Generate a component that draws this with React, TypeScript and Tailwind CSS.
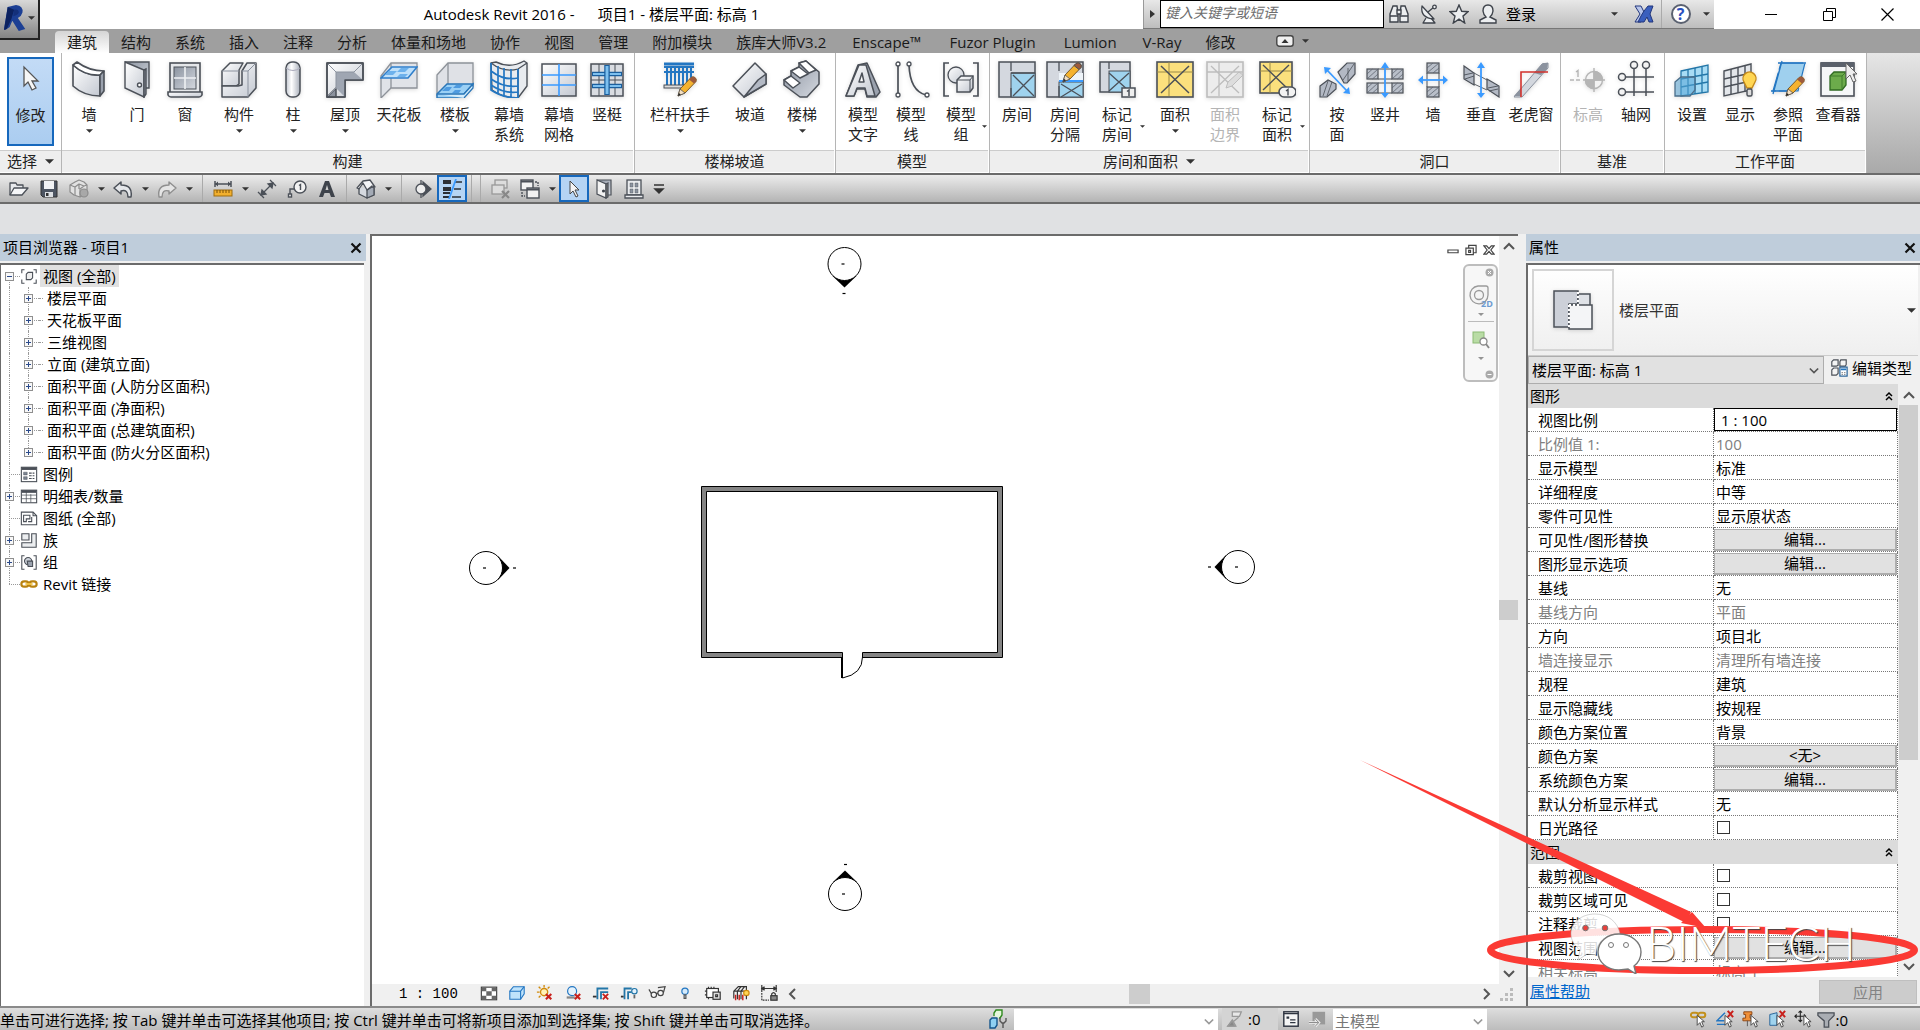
import { ReactNode } from "react";
import { clsx } from "clsx";

type IconMap = Record<string, ReactNode>;

const M = "url(#metal)";
const MD = "url(#metalDark)";
const S = "#4b5058";

const pencil = (
  <g transform="translate(16 16)">
    <path d="M1 20l2-7L14 1.500q2-1.500 4 0t1 4L8 17z" fill="#f5b32f" stroke="#7a5a28" />
    <path d="M14 1.500q2-1.500 4 0t1 4l-2 2-5-4z" fill="#9c5a3c" />
    <path d="M1 20l2-7 5 4z" fill="#f4dfc0" stroke="#555" strokeWidth=".8" />
    <path d="M1 20l.8-3 2 1.500z" fill="#222" />
  </g>
);

const hatch = (x: number, y: number, w: number, h: number) => (
  <g key={`${x}-${y}`}>
    <rect x={x} y={y} width={w} height={h} fill="#b9bfc9" stroke={S} strokeWidth="1.200" />
    <path d={`M${x} ${y + h}L${x + w} ${y}M${x} ${y + h / 2}L${x + w / 2} ${y}M${x + w / 2} ${y + h}L${x + w} ${y + h / 2}`} stroke="#5e6570" strokeWidth=".8" />
  </g>
);

const big: IconMap = {
  cursor: <path d="M12 4v19l4-4 4 8 4-2-4-7h6z" fill="#f6f6f6" stroke="#555" strokeWidth="1.300" />,
  wall: (
    <g stroke={S} strokeWidth="1.600" strokeLinejoin="round">
      <path d="M3 5q12 11 27 10v21Q14 36 3 26z" fill={M} />
      <path d="M3 5l4-3q12 9 27 9l-4 4Q15 16 3 5z" fill="#fff" />
      <path d="M30 15l4-4v20l-4 5z" fill="#9aa1ad" />
    </g>
  ),
  door: (
    <g stroke={S} strokeWidth="1.400">
      <path d="M7 2h24v26h-6" fill={MD} />
      <path d="M7 2l19 8v27L7 28z" fill={M} />
      <path d="M26 10l2-1v25l-2 3z" fill="#8b929e" />
      <circle cx="21.500" cy="25" r="2" fill="#fff" />
    </g>
  ),
  window: (
    <g stroke={S} strokeWidth="1.600">
      <rect x="4" y="3" width="30" height="30" fill="#e5e7ea" />
      <rect x="8" y="7" width="22" height="22" fill={MD} strokeWidth="1" />
      <path d="M19 7v22M8 18h22" stroke="#eef0f3" strokeWidth="1.600" />
      <path d="M2 32h34v3q-1 2-3 2H5q-2 0-3-2z" fill={M} />
    </g>
  ),
  component: (
    <g stroke={S} strokeWidth="1.500" strokeLinejoin="round">
      <path d="M2 11l8-8h13l-4 7v14l-3 2H2z" fill={M} />
      <path d="M2 26v11h26l8-9V3h-9l-5 8v14l-4 1z" fill={M} />
      <path d="M2 11h17M28 11v26M22 11h6l8-8" fill="none" stroke="#8b929e" strokeWidth="1" />
    </g>
  ),
  column: (
    <g stroke={S} strokeWidth="1.500">
      <rect x="12" y="2" width="14" height="35" rx="6" fill="url(#metalH)" />
      <path d="M12 8q7 5 14 0" fill="none" stroke="#aab" strokeWidth="1" />
    </g>
  ),
  roof: (
    <g stroke={S} strokeWidth="1.500" strokeLinejoin="round">
      <path d="M1 3h36v17H19v17H1z" fill={M} />
      <path d="M1 37l9-9v9z" fill="#8b929e" />
      <path d="M10 12h18l9 8H19v17l-9-9z" fill="#9fa6b2" stroke="none" />
      <path d="M1 3l9 9h18l9-9M10 12v16l-9 9" fill="none" stroke="#8b929e" strokeWidth="1" />
      <path d="M1 3h36v17H19v17H1z" fill="none" />
    </g>
  ),
  ceiling: (
    <g stroke="#8d9299" strokeWidth="1.300">
      <path d="M1 16L11 3h26v25H11L1 38z" fill="#e0e3e8" />
      <path d="M11 3v25" />
      <path d="M1 18L12 7h25L28 18z" fill="#bfe0fa" stroke="#2f7fcb" strokeWidth="1.600" />
      <path d="M9 11h8l-4 4H5zM21 8h8l-4 4h-8zM20 14h8l-3 3h-8z" fill="#6db1ec" stroke="none" />
    </g>
  ),
  floor: (
    <g stroke="#8d9299" strokeWidth="1.300">
      <path d="M1 15L12 3h25v23H12L1 35z" fill="#dfe1e6" />
      <path d="M12 3v22" />
      <path d="M1 34l10-10h26l-9 10v4H1z" fill="#9bd0f5" stroke="#2a76b8" strokeWidth="1.500" />
      <path d="M1 34h27l9-10v4l-9 10" fill="#d5edfb" stroke="#2a76b8" strokeWidth="1.300" />
      <path d="M10 27h6l-3 4H6zM20 25h7l-3 3h-7zM19 30h6l-2 3h-7z" fill="#4f9be0" stroke="none" />
    </g>
  ),
  curtainSystem: (
    <g>
      <path d="M1 3l5-1q14 7 28-1l3 2v23l-9 12Q13 38 2 30z" fill="#e8ebef" stroke={S} strokeWidth="1.400" />
      <path d="M1 3q13 10 27 6l9-6M28 9v29" fill="none" stroke={S} strokeWidth="1.300" />
      <path d="M8 6v28M14 8v28M21 9v28M1 11q13 10 27 7M1 19q13 9 27 7M1 25q13 9 27 7M1 3v27q12 8 27 8V9" fill="none" stroke="#2376c2" strokeWidth="1.700" />
    </g>
  ),
  curtainGrid: (
    <g>
      <rect x="2" y="4" width="34" height="32" fill={M} stroke={S} strokeWidth="1.500" />
      <path d="M19 4v32M2 15h34M2 25h34" stroke="#3a9aff" strokeWidth="1.600" />
    </g>
  ),
  mullion: (
    <g>
      <rect x="3" y="4" width="32" height="32" fill="#d9dce1" stroke={S} strokeWidth="1.500" />
      <path d="M11 4v32M27 4v32M3 20h32" stroke={S} strokeWidth="1" />
      <path d="M4 14h30M4 26h30" stroke="#1b5f9e" strokeWidth="4.500" />
      <path d="M5 14h28M5 26h28" stroke="#7dc0ef" strokeWidth="2" />
      <path d="M19 5v30" stroke="#1b5f9e" strokeWidth="5.500" />
      <path d="M19 6v28" stroke="#7dc0ef" strokeWidth="3" />
    </g>
  ),
  railing: (
    <g>
      <path d="M3 7h30M3 12h30M6 7v18M10 7v18M14 7v18M18 7v18M22 7v18M26 7v18M30 7v14" stroke="#2376c2" strokeWidth="2" />
      <path d="M3 4h30" stroke="#2376c2" strokeWidth="3" />
      <rect x="3" y="25" width="20" height="3" fill="#ddd" stroke={S} />
      {pencil}
    </g>
  ),
  ramp: (
    <g stroke={S} strokeWidth="1.500" strokeLinejoin="round">
      <path d="M2 26L24 3l11 11v10L13 37z" fill={M} />
      <path d="M13 37l14-17 8-6v10z" fill="#b3b9c4" />
    </g>
  ),
  stair: (
    <g stroke={S} strokeWidth="1.500" strokeLinejoin="round">
      <path d="M1 20l7-4 0-5 8-4v-4l7-2 13 11v12L24 37h-7L1 25z" fill={MD} />
      <path d="M1 20l7-4 9 7-7 5zM8 11l8-4 9 7-8 4zM16 3l7-2 10 9-7 3z" fill="#fff" />
    </g>
  ),
  modelText: (
    <g stroke={S} strokeWidth="1.500" strokeLinejoin="round">
      <path d="M14 5l9-2 13 29-4 5h-9l-2-8h-8l-3 7H2z" fill="#9aa1ad" />
      <path d="M2 36L15 5h7l9 31h-8l-2-8h-8l-3 8z" fill={M} />
      <path d="M15 22l3-9 2 9z" fill="#fff" />
    </g>
  ),
  modelLine: (
    <g fill="none" stroke={S} strokeWidth="1.700">
      <path d="M6 5v29M17 5q1 26 17 30" />
      <g fill="#fff" strokeWidth="1.300">
        <circle cx="6" cy="4" r="2" /><circle cx="6" cy="35" r="2" /><circle cx="17" cy="4" r="2" /><circle cx="35" cy="35" r="2" />
      </g>
    </g>
  ),
  modelGroup: (
    <g stroke={S} strokeWidth="1.700" fill="none">
      <path d="M7 3H2v33h5M31 3h5v33h-5" />
      <circle cx="14" cy="15" r="8" fill={M} strokeWidth="1.300" />
      <path d="M15 20l4-4h12v12l-3 4H15z" fill={M} strokeWidth="1.500" />
      <path d="M15 20h13v12M28 20l3-4" strokeWidth="1" />
    </g>
  ),
  room: (
    <g stroke={S}>
      <rect x="1" y="2" width="36" height="35" fill="#d4d8df" strokeWidth="1.500" />
      <rect x="13" y="13" width="24" height="24" fill="#9fd3ee" strokeWidth="1" />
      <path d="M13 2v9M13 28v9M13 13h24M15 15l21 21M36 15L15 36" strokeWidth="1.300" />
    </g>
  ),
  roomSeparator: (
    <g stroke={S}>
      <rect x="1" y="2" width="36" height="35" fill="#d4d8df" strokeWidth="1.500" />
      <path d="M13 13h24v9H13z" fill="#eef4f9" stroke="none" />
      <rect x="13" y="22" width="24" height="15" fill="#9fd3ee" strokeWidth="1" />
      <path d="M13 2v9M13 26v11M15 24l21 13M36 24L15 37" strokeWidth="1.300" />
      <path d="M13 21h24" stroke="#3a9aff" strokeWidth="2" />
      <g transform="translate(0 -14)">{pencil}</g>
    </g>
  ),
  tagRoom: (
    <g stroke={S}>
      <rect x="2" y="2" width="30" height="30" fill="#d4d8df" strokeWidth="1.500" />
      <rect x="11" y="11" width="21" height="21" fill="#9fd3ee" strokeWidth="1" />
      <path d="M11 2v7M11 13l20 18M31 13L11 31" strokeWidth="1.300" />
      <rect x="24" y="28" width="13" height="9" fill="#eee" strokeWidth="1.500" />
      <path d="M29 31.500l2-1.500v6" fill="none" strokeWidth="1.500" />
    </g>
  ),
  area: (
    <g stroke={S}>
      <rect x="1" y="2" width="36" height="35" fill="#fbe07d" strokeWidth="1.600" />
      <path d="M13 2v34M1 12h36" stroke="#9b8a48" />
      <path d="M5 6l28 27M33 6L5 33" strokeWidth="1.500" />
    </g>
  ),
  areaBoundary: (
    <g stroke="#bdbdbd">
      <rect x="1" y="2" width="36" height="35" fill="#ececec" strokeWidth="1.600" />
      <path d="M13 2v34M1 12h36M5 6l28 27M33 6L5 33" strokeWidth="1.300" />
      <path d="M20 28l2-6 11-10 4 3-11 11z" fill="#ddd" />
    </g>
  ),
  tagArea: (
    <g stroke={S}>
      <rect x="2" y="2" width="32" height="31" fill="#fbe07d" strokeWidth="1.600" />
      <path d="M12 2v31M2 11h32" stroke="#9b8a48" />
      <path d="M5 5l26 25M31 5L5 30" strokeWidth="1.400" />
      <rect x="21" y="27" width="17" height="10" rx="5" fill="#f2f2f2" strokeWidth="1.600" />
      <path d="M28 31l2-1.500v6" fill="none" strokeWidth="1.400" />
    </g>
  ),
  byFace: (
    <g stroke={S} strokeWidth="1.200">
      <path d="M20 12l9-9h8v11l-8 9h-3z" fill="#b3b9c4" />
      <path d="M2 26l8-6 8 4v5l-9 8H2z" fill="#b3b9c4" />
      <path d="M25 20L36 4M5 36l5-15M9 36l5-14M30 21V8" strokeWidth=".8" />
      <path d="M8 9l22 23" stroke="#3a9aff" strokeWidth="1.800" />
      <path d="M6 7l7 1-6 6zM32 34l-1-7-6 6z" fill="#3a9aff" stroke="none" />
    </g>
  ),
  shaft: (
    <g>
      {hatch(1, 9, 11, 10)}{hatch(26, 9, 11, 10)}{hatch(1, 23, 11, 10)}{hatch(26, 23, 11, 10)}
      <path d="M12 9h14M12 19h14M12 23h14M12 33h14" stroke={S} />
      <path d="M19 6v29" stroke="#3a9aff" strokeWidth="1.800" />
      <path d="M15 8l4-6 4 6zM15 33l4 5 4-5z" fill="#3a9aff" />
    </g>
  ),
  wallOpening: (
    <g>
      {hatch(13, 3, 12, 10)}{hatch(13, 27, 12, 10)}
      <path d="M13 13v14M25 13v14" stroke={S} />
      <path d="M6 20h26" stroke="#3a9aff" strokeWidth="1.800" />
      <path d="M9 15.500L4 20l5 4.500zM29 15.500l5 4.500-5 4.500z" fill="#3a9aff" />
    </g>
  ),
  vertical: (
    <g stroke={S} strokeWidth="1.200">
      <path d="M2 6l10 7v12L2 19zM25 19l12 7v11l-12-8z" fill="#b3b9c4" />
      <path d="M12 13l13 7M12 24l13 6M2 15l9-2M3 19l9-3M26 28l10-2M27 31l9-2" strokeWidth=".9" />
      <path d="M19 6v29" stroke="#3a9aff" strokeWidth="1.800" />
      <path d="M15 8l4-6 4 6zM15 33l4 5 4-5z" fill="#3a9aff" stroke="none" />
    </g>
  ),
  dormer: (
    <g>
      <path d="M2 37L30 4l6-1v5L10 37z" fill="#d3d7de" stroke="#8b929e" />
      <path d="M22 13L31 3h5l-1 6-6 6zM2 36l7-8v8z" fill="#8b929e" />
      <path d="M9 37V12h27" fill="none" stroke="#d2322d" strokeWidth="1.600" />
    </g>
  ),
  level: (
    <g stroke="#b5b5b5" fill="none" strokeWidth="1.400">
      <path d="M1 20h12" strokeDasharray="4 2" />
      <path d="M7 12l2-1.500V17" />
      <circle cx="25" cy="20" r="8.500" fill="#f3f3f3" />
      <path d="M25 20V11.500A8.500 8.500 0 0 1 33.500 20zM25 20v8.500A8.500 8.500 0 0 1 16.500 20z" fill="#b5b5b5" />
      <path d="M25 8v24M14 20h22" />
    </g>
  ),
  grid: (
    <g stroke={S} strokeWidth="1.500" fill="none">
      <path d="M17 9v27M29 9v27M9 17h28M9 32h28" />
      <circle cx="17" cy="5" r="3.500" /><circle cx="29" cy="5" r="3.500" /><circle cx="5" cy="17" r="3.500" /><circle cx="5" cy="32" r="3.500" />
    </g>
  ),
  setPlane: (
    <g stroke="#2376a8" strokeWidth="1.300">
      <path d="M8 11l27-6v27L8 36z" fill="#a8dcf5" />
      <path d="M15 10v25M22 8v26M29 7v26M8 19l27-5M8 27l27-5" fill="none" />
      <path d="M2 22l6-5h14v13l-5 6H2z" fill="#58a5d5" fillOpacity=".55" stroke="#4b6f8b" />
    </g>
  ),
  showPlane: (
    <g stroke={S} strokeWidth="1.400">
      <path d="M3 11l27-7v26L3 36z" fill="#e3e6ea" />
      <path d="M10 9v25M17 7v26M24 6v26M3 19l27-6M3 27l27-6" fill="none" />
      <path d="M23 22a6.500 6.500 0 1 1 11 0l-3 6h-5z" fill="#ffd653" stroke="#c58a1b" />
      <rect x="26" y="29" width="5" height="7" rx="1.500" fill="#ddd" />
    </g>
  ),
  refPlane: (
    <g>
      <path d="M12 3h24l-7 28H4z" fill="#9fd0ee" stroke="#2376c2" strokeWidth="1.200" strokeDasharray="22 3" />
      <path d="M9 3h28M2 31h20M13 1L4 34" stroke="#2376c2" strokeWidth="1.300" />
      {pencil}
    </g>
  ),
  viewer: (
    <g>
      <rect x="2" y="3" width="33" height="33" fill="#f5f6f7" stroke={S} strokeWidth="1.600" />
      <rect x="2" y="2" width="33" height="5" fill="#5b616b" />
      <path d="M11 16l4-4h12v13l-4 5H11z" fill="#6cab4b" stroke="#2f6a22" strokeWidth="1.300" />
      <path d="M11 16h12l4-4M23 16v14" fill="none" stroke="#3f7d2c" />
      <path d="M27 3v16l4-4 3 7 3-1-3-7h4z" fill="#eee" stroke="#666" />
    </g>
  ),
};

// small 20x20 glyphs of the bars
const small: IconMap = {
  open: (
    <g stroke={S} strokeWidth="1.300" strokeLinejoin="round">
      <path d="M1 16V4h6l1 2h6v3" fill="#e8eaed" />
      <path d="M1 16l4-7h14l-6 7z" fill="#f5f6f8" />
    </g>
  ),
  save: (
    <g>
      <path d="M2 2h16v16H4l-2-2z" fill="#4d5562" stroke="#333" />
      <path d="M5 2h10v8H5z" fill="#f1f2f4" />
      <path d="M6 13h8v5H6z" fill="#dcdfe3" /><path d="M7 14h2.500v3H7z" fill="#333" />
    </g>
  ),
  sync: (
    <g stroke="#8c8c8c" strokeWidth="1.200" fill="#e2e2e2" strokeLinejoin="round">
      <path d="M1 6l5-3 4-2 5 2 3 3v8l-7 4-6-2-4-3z" />
      <path d="M1 6l5 2 4-3 5 2 3-1M6 8v8M10 5v5M11 18v-8l4-3" fill="none" />
      <circle cx="15" cy="14" r="4" fill="#a8a8a8" />
    </g>
  ),
  undo: <path d="M8 3L1 9l7 6v-3q7-2 7 6h3q2-12-10-12z" fill="#e5e7ea" stroke={S} strokeWidth="1.500" strokeLinejoin="round" />,
  redo: <path d="M12 3l7 6-7 6v-3q-7-2-7 6H2Q0 6 12 6z" fill="#e5e5e5" stroke="#8f8f8f" strokeWidth="1.400" strokeLinejoin="round" />,
  measure: (
    <g>
      <path d="M2 5h16M2 2v6M18 2v6" stroke={S} strokeWidth="1.500" />
      <path d="M5 2.500L2 5l3 2.500zM15 2.500L18 5l-3 2.500z" fill={S} />
      <rect x="1" y="11" width="18" height="6" fill="#f2b02e" stroke="#9d6d11" />
      <path d="M4 11v3M7 11v3M10 11v3M13 11v3M16 11v3" stroke="#7a5108" />
    </g>
  ),
  dimension: (
    <g stroke={S} strokeWidth="1.300">
      <path d="M4 16L16 4M1 13l6 6M13 1l6 6" /><path d="M4 16l1-5 4 4zM16 4l-1 5-4-4z" fill={S} />
    </g>
  ),
  tag: (
    <g stroke={S} strokeWidth="1.400" fill="#f2f2f2">
      <circle cx="13" cy="8" r="6" /><path d="M12 6.500l1.500-1v5.500" fill="none" /><path d="M7 10H3v6" fill="none" /><rect x="1.500" y="15" width="3" height="3" />
    </g>
  ),
  text: <path d="M2 18L8 2h4l6 16h-4l-1.500-4h-5L6 18zM8.500 11h3L10 6z" fill="#3e434b" />,
  home: (
    <g stroke={S} strokeWidth="1.300" strokeLinejoin="round">
      <path d="M3 9v6l8 4 7-3V8" fill="#d5d9df" />
      <path d="M11 11l5-3 2 1v7l-7 3z" fill="#a4abb6" />
      <path d="M1 9l6-7 7-1 5 7-3-1-5 4-4-7-4 6z" fill="#f4f5f7" />
    </g>
  ),
  section: (
    <g stroke={S} strokeWidth="1.300"><path d="M11 3l8 7-8 7z" fill={S} /><circle cx="9" cy="10" r="5" fill="#eee" /><path d="M9 1v4M9 15v4" /></g>
  ),
  thinLines: (
    <g>
      <path d="M1 3h8M1 10h8" stroke="#2b2f36" strokeWidth="4" /><path d="M1 14h7M1 18h6" stroke="#2b2f36" strokeWidth="1.800" />
      <path d="M13 3h7M12 10h7M10 18h9" stroke="#2b2f36" strokeWidth="1.300" /><path d="M14 0L7 20" stroke="#3a9aff" strokeWidth="1.800" />
    </g>
  ),
  closeHidden: (
    <g fill="#ddd" stroke="#999" strokeWidth="1.300"><rect x="5" y="1" width="12" height="8" /><rect x="2" y="6" width="12" height="9" /><path d="M12 12l7 7M19 12l-7 7" stroke="#888" strokeWidth="2.200" /></g>
  ),
  switchWin: (
    <g fill="#f2f2f2" stroke={S} strokeWidth="1.400"><rect x="1" y="1" width="12" height="10" /><rect x="7" y="9" width="12" height="10" /><path d="M1 2.500h12M7 10.500h12" strokeWidth="2" /><path d="M15 3h3v4M2 13v4h3" fill="none" strokeDasharray="2 1" /></g>
  ),
  cursorS: <path d="M6 2v13l3-3 3 6 2-1-3-6h4z" fill="#f4f4f4" stroke="#444" />,
  doorS: (
    <g stroke={S} strokeWidth="1.200"><path d="M3 1h14v15h-3" fill={MD} /><path d="M3 1l9 4v14l-9-4z" fill="#f2f2f2" /><path d="M12 5l2-1v14l-2 1z" fill="#777" /><circle cx="9.500" cy="12" r="1" /></g>
  ),
  windowS: (
    <g stroke={S} strokeWidth="1.300" fill="#e9ebee"><rect x="3" y="1" width="14" height="15" /><path d="M6 4h3v4H6zM11 4h3v4h-3zM6 10h3v4H6zM11 10h3v4h-3z" fill="#8b93a0" strokeWidth=".4" /><path d="M1 16h18v3H1z" /></g>
  ),
  customise: <path d="M5 6h10M6 10h8l-4 4z" stroke="#333" strokeWidth="1.500" fill="#333" />,
  binoculars: (
    <g stroke="#3e434b" strokeWidth="1.400" fill="#eceef0"><path d="M4 2h4l1 8v8H1v-8zM12 2h4l3 8v8h-8v-8z" /><path d="M1 12h8M11 12h8M8 6h4v4H8z" /></g>
  ),
  dish: (
    <g stroke="#3e434b" strokeWidth="1.300" fill="#eceef0" strokeLinejoin="round"><path d="M7 14l-3 5h12l-4-5" /><path d="M3 2q-2 12 12 13z" /><path d="M9 8l6-5" /><circle cx="15.500" cy="3" r="1.800" /></g>
  ),
  star: <path d="M10 1l2.700 6.300 6.300.4-5 4.400 1.700 6.900L10 15.200 4.300 19 6 12.100 1 7.700l6.300-.4z" fill="#eceef0" stroke="#3e434b" strokeWidth="1.400" />,
  user: <path d="M10 1q5 0 5 6-.500 4-3 6l6 3v3H2v-3l6-3q-2.500-2-3-6 0-6 5-6z" fill="#eceef0" stroke="#3e434b" strokeWidth="1.400" />,
  exchange: (
    <g stroke="#22367c" strokeWidth="1"><path d="M1 2h6l4 8-4 8H1l5-8z" fill="#b9c6ea" /><path d="M19 2h-5l-4 5-3 5-3 6h6l3-5 2 5h4l-3-8z" fill="#3a5fbe" /></g>
  ),
  views: (
    <g stroke="#4a4f57" strokeWidth="1.200" fill="none"><path d="M5 3H2v4M15 3h3v4M5 18H2v-4M15 18h3v-4" /><path d="M7 8l2-2h5v6l-2 2H7z" fill="#eee" /></g>
  ),
  legend: (
    <g stroke="#4a4f57" strokeWidth="1.200"><rect x="1.500" y="2.500" width="17" height="16" fill="#fff" /><path d="M2 4h16" strokeWidth="3" /><path d="M4 8h4v3H4zM4 13h4v3H4z" fill="#7d8693" strokeWidth=".5" /><path d="M10 9h6M10 12h6M10 15h6" strokeDasharray="3 1" /></g>
  ),
  schedule: (
    <g stroke="#4a4f57" strokeWidth="1.200"><rect x="1.500" y="3.500" width="17" height="14" fill="#fff" /><path d="M2 5h16" strokeWidth="3" /><path d="M2 9h16M2 13h16M7 5v12M12 8v9" strokeWidth=".8" /></g>
  ),
  sheet: (
    <g stroke="#4a4f57" strokeWidth="1.200" fill="#fff"><path d="M1.500 3.500h13l4 4v10h-17z" /><path d="M4 7h7v4H7v3H4zM13 9v5h-4M14.500 3.500v4h4" fill="none" /></g>
  ),
  family: (
    <g stroke="#4a4f57" strokeWidth="1.200" fill="#eceef0"><path d="M2 3h8v7H2zM13 3h5v15H2v-5h11z" /></g>
  ),
  group: (
    <g stroke="#4a4f57" strokeWidth="1.200" fill="none"><path d="M5 3H2v15h3M15 3h3v15h-3" /><circle cx="9" cy="9" r="4" fill="#cfd4dc" /><path d="M8 9h6v6H9z" fill="#9aa2ae" /></g>
  ),
  link: (
    <g fill="none" stroke="#b9820f" strokeWidth="2.400"><rect x="1.500" y="7" width="8" height="6" rx="3" /><rect x="10.500" y="7" width="8" height="6" rx="3" /><path d="M6 10h8" stroke="#f4c542" strokeWidth="2" /></g>
  ),
  editType: (
    <g stroke={S} strokeWidth="1.300" fill="#f4f4f4"><path d="M2 3l2-2h5v6l-2 1H2zM11 3l1-2h6v5l-1 2h-6zM2 12l2-2h5v6l-2 2H2z" /><rect x="11" y="9" width="8" height="10" fill="#fff" stroke="#1f5d95" /><path d="M12 11.500h6" stroke="#2376c2" strokeWidth="2" /><path d="M13 15h1M16 15h1M13 17h1M16 17h1" /></g>
  ),
  detail: (
    <g><rect x="1.500" y="3.500" width="17" height="14" fill="#fff" stroke="#444" strokeWidth="1.300" /><path d="M2 4h5v4H2zM13 4h5v4h-5zM7 8h6v5H7zM2 13h5v4H2zM13 13h5v4h-5z" fill="#666" /></g>
  ),
  cube: (
    <g fill="#bfe3fb" stroke="#2376c2" strokeWidth="1.200"><path d="M2 8l4-5h12v8l-4 6H2z" /><path d="M2 8h12v9M14 8l4-5" fill="none" /></g>
  ),
  sun: (
    <g><circle cx="9" cy="9" r="4" fill="#fff2b8" stroke="#d18b0d" strokeWidth="1.500" /><path d="M9 1v3M1 9h3M3 3l2 2M15 3l-2 2M3 15l2-2" stroke="#d18b0d" strokeWidth="1.500" /><path d="M11 11l6 6M17 11l-6 6" stroke="#c8201c" strokeWidth="2.300" /></g>
  ),
  shadow: (
    <g><circle cx="9" cy="8" r="5" fill="#e4f2fc" stroke="#2376c2" strokeWidth="1.300" /><path d="M3 15h9" stroke="#888" strokeWidth="2.500" /><path d="M12 11l6 6M18 11l-6 6" stroke="#c8201c" strokeWidth="2.300" /></g>
  ),
  crop: (
    <g fill="none" stroke="#2376a8" strokeWidth="2"><path d="M6 17V5h12M10 17V9h8" /><path d="M1 14h4" stroke="#333" /><path d="M12 11l6 6M18 11l-6 6" stroke="#c8201c" /></g>
  ),
  cropShow: (
    <g fill="none" stroke="#2376a8" strokeWidth="2"><path d="M5 17V5h8M9 17V9h4" /><path d="M1 14h3" stroke="#333" /><circle cx="16" cy="8" r="3" fill="#e4f2fc" strokeWidth="1.300" /><path d="M16 12v4" stroke="#666" /></g>
  ),
  glasses: (
    <g fill="#f6f6f6" stroke="#444" strokeWidth="1.300"><path d="M1 6l3 5M11 4l8-1-2 7" fill="none" /><circle cx="6.500" cy="12" r="3" /><circle cx="14" cy="10" r="3" /><path d="M9 11l2-1" /></g>
  ),
  bulb: (
    <g fill="#d6ebfb" stroke="#2376c2" strokeWidth="1.300"><circle cx="10" cy="8" r="3.500" /><path d="M9 12h2v4H9z" stroke="#555" /></g>
  ),
  chip: (
    <g fill="#fff" stroke="#333" strokeWidth="1.300"><rect x="3" y="5" width="13" height="10" /><path d="M5 3v2M8 3v2M11 3v2M5 15v2M1 8h2M1 12h2" /><rect x="10" y="9" width="8" height="8" fill="#ddd" /><path d="M13 12h2v2h-2z" /></g>
  ),
  analytic: (
    <g fill="none" stroke="#333" strokeWidth="1.300"><path d="M2 16V8l5-5h9v6M2 8h12M6 8v9M10 8v9M6 8l4-5M10 8l4-5" /><path d="M4 12v6M8 12v6M12 12v6" stroke="#c8201c" strokeWidth="1.600" /><circle cx="16" cy="10" r="3" fill="#ffd653" stroke="#d18b0d" /><path d="M16 13v4" /></g>
  ),
  constraint: (
    <g fill="none" stroke="#333" strokeWidth="1.300"><path d="M2 1v8M18 1v8M2 5h16" /><path d="M2 10v8h8" strokeDasharray="2 1" /><path d="M5 3L2 5l3 2M15 3l3 2-3 2" fill="#333" /><rect x="12" y="13" width="7" height="5" fill="#888" /><path d="M13 13v-2q2-3 4 0v2" /></g>
  ),
  worksets: (
    <g strokeWidth="1.400"><path d="M2 11l2-2h5v7l-2 3H2z" fill="#8ed0f2" stroke="#14568c" /><path d="M6 7V4l2-3h6v5l-2 3h-1" fill="#e6f6dc" stroke="#2f8a1e" /><path d="M12 9v3l2 2h2l2-2V9M15 14v5" stroke="#555" fill="none" /></g>
  ),
  editable: (
    <g fill="#e8e8e8" stroke="#999" strokeWidth="1.400"><path d="M7 2h10l-2 5H7zM14 8l-6 5M2 18l5-7 4 7z" /><path d="M2 18l5-6 3 6z" fill="#888" /></g>
  ),
  listBox: (
    <g fill="#f5f5f5" stroke="#2e3440" strokeWidth="1.600"><rect x="2" y="2" width="16" height="16" /><path d="M2 4h16M5 8h3M9 11h6M9 14h6M5 9h3" /></g>
  ),
  arrowBox: (
    <g><rect x="5" y="2" width="14" height="14" fill="#999" /><path d="M1 14h10M8 10l4 4-4 4" fill="none" stroke="#eee" strokeWidth="3" /><path d="M1 14h10M8 10l4 4-4 4" fill="none" stroke="#777" /></g>
  ),
  selLink: (
    <g><rect x="1" y="3" width="8" height="5" rx="2.500" fill="none" stroke="#c2901b" strokeWidth="2.200" /><rect x="9" y="3" width="8" height="5" rx="2.500" fill="none" stroke="#c2901b" strokeWidth="2.200" /><path d="M8 6v11l3-3 2 5 2-1-2-5h3z" fill="#fff" stroke="#444" /></g>
  ),
  selUnder: (
    <g><path d="M10 3L1 12h8M1 16h9" fill="none" stroke="#2376c2" strokeWidth="1.600" /><path d="M13 1l6 7M19 1l-6 7" stroke="#c8201c" strokeWidth="2.200" /><path d="M10 6v11l3-3 2 5 2-1-2-5h3z" fill="#fff" stroke="#444" /></g>
  ),
  selPin: (
    <g><path d="M2 2h9v3H9v4h3v3H1V9h3V5H2z" fill="#f0913a" stroke="#8a4210" /><path d="M6 12v6" stroke="#555" /><path d="M10 6v11l3-3 2 5 2-1-2-5h3z" fill="#fff" stroke="#444" /></g>
  ),
  selFace: (
    <g><path d="M2 5l8-2v14H2z" fill="#9fd3ee" stroke="#1f5d95" /><path d="M13 1l6 7M19 1l-6 7" stroke="#c8201c" strokeWidth="2.200" /><path d="M10 6v11l3-3 2 5 2-1-2-5h3z" fill="#fff" stroke="#444" /></g>
  ),
  selDrag: (
    <g><path d="M7 1v12M1 7h12M5 3l2-2 2 2M5 11l2 2 2-2M3 5L1 7l2 2M11 5l2 2-2 2" fill="none" stroke="#222" strokeWidth="1.200" /><path d="M11 6v11l3-3 2 5 2-1-2-5h3z" fill="#fff" stroke="#444" /></g>
  ),
  filter: <path d="M1 2h18v3l-6 6v7H8v-7L1 5z" fill="#a9adb3" stroke="#4a4f57" strokeWidth="1.400" />,
};

function Icon({ name, className }: { name: string; className?: string }) {
  return (
    <svg viewBox="0 0 20 20" aria-hidden="true" className={clsx("shrink-0", className ?? "size-5")}>
      {small[name]}
    </svg>
  );
}

function Caret({ className }: { className?: string }) {
  return (
    <svg viewBox="0 0 8 4" aria-hidden="true" className={clsx("shrink-0", className ?? "h-[3px] w-[6px]")}>
      <path d="M0 0h8L4 4z" fill="#333" />
    </svg>
  );
}

function Chevron({ d, className }: { d: string; className?: string }) {
  return (
    <svg viewBox="0 0 12 12" aria-hidden="true" className={clsx("size-3", className)}>
      <path d={d} fill="none" stroke="currentColor" strokeWidth="2" />
    </svg>
  );
}

const UP = "M1 9l5-5 5 5";
const DOWN = "M1 3l5 5 5-5";

const tabs = [
  "建筑", "结构", "系统", "插入", "注释", "分析", "体量和场地", "协作", "视图", "管理",
  "附加模块", "族库大师V3.2", "Enscape™", "Fuzor Plugin", "Lumion", "V-Ray", "修改",
];
const pluginTabs = ["Enscape™", "Fuzor Plugin", "Lumion"];

const W = {
  xs: "w-[44px]",
  sm: "w-[48px]",
  md: "w-[52px]",
  lg: "w-[56px]",
  tag: "w-[60px]",
  wide: "w-[88px]",
};

type Tool = {
  icon: string;
  lines: string[];
  size: keyof typeof W;
  menu?: "below" | "side";
  disabled?: boolean;
};

type Panel = { title: string; width: string; tools: Tool[]; menu?: boolean };

const panels: Panel[] = [
  {
    title: "构建",
    width: "w-[573px]",
    tools: [
      { icon: "wall", lines: ["墙"], size: "md", menu: "below" },
      { icon: "door", lines: ["门"], size: "xs" },
      { icon: "window", lines: ["窗"], size: "md" },
      { icon: "component", lines: ["构件"], size: "lg", menu: "below" },
      { icon: "column", lines: ["柱"], size: "md", menu: "below" },
      { icon: "roof", lines: ["屋顶"], size: "md", menu: "below" },
      { icon: "ceiling", lines: ["天花板"], size: "lg" },
      { icon: "floor", lines: ["楼板"], size: "lg", menu: "below" },
      { icon: "curtainSystem", lines: ["幕墙", "系统"], size: "md" },
      { icon: "curtainGrid", lines: ["幕墙", "网格"], size: "sm" },
      { icon: "mullion", lines: ["竖梃"], size: "sm" },
    ],
  },
  {
    title: "楼梯坡道",
    width: "w-[201px]",
    tools: [
      { icon: "railing", lines: ["栏杆扶手"], size: "wide", menu: "below" },
      { icon: "ramp", lines: ["坡道"], size: "md" },
      { icon: "stair", lines: ["楼梯"], size: "md", menu: "below" },
    ],
  },
  {
    title: "模型",
    width: "w-[154px]",
    tools: [
      { icon: "modelText", lines: ["模型", "文字"], size: "md" },
      { icon: "modelLine", lines: ["模型", "线"], size: "xs" },
      { icon: "modelGroup", lines: ["模型", "组"], size: "lg", menu: "side" },
    ],
  },
  {
    title: "房间和面积",
    width: "w-[320px]",
    menu: true,
    tools: [
      { icon: "room", lines: ["房间"], size: "md" },
      { icon: "roomSeparator", lines: ["房间", "分隔"], size: "xs" },
      { icon: "tagRoom", lines: ["标记", "房间"], size: "tag", menu: "side" },
      { icon: "area", lines: ["面积"], size: "lg", menu: "below" },
      { icon: "areaBoundary", lines: ["面积", "边界"], size: "xs", disabled: true },
      { icon: "tagArea", lines: ["标记", "面积"], size: "tag", menu: "side" },
    ],
  },
  {
    title: "洞口",
    width: "w-[251px]",
    tools: [
      { icon: "byFace", lines: ["按", "面"], size: "md" },
      { icon: "shaft", lines: ["竖井"], size: "xs" },
      { icon: "wallOpening", lines: ["墙"], size: "md" },
      { icon: "vertical", lines: ["垂直"], size: "xs" },
      { icon: "dormer", lines: ["老虎窗"], size: "lg" },
    ],
  },
  {
    title: "基准",
    width: "w-[104px]",
    tools: [
      { icon: "level", lines: ["标高"], size: "md", disabled: true },
      { icon: "grid", lines: ["轴网"], size: "xs" },
    ],
  },
  {
    title: "工作平面",
    width: "w-[202px]",
    tools: [
      { icon: "setPlane", lines: ["设置"], size: "md" },
      { icon: "showPlane", lines: ["显示"], size: "xs" },
      { icon: "refPlane", lines: ["参照", "平面"], size: "md" },
      { icon: "viewer", lines: ["查看器"], size: "sm" },
    ],
  },
];

// "|" is a separator, "v" the drop-down arrow of the button before it
const quickAccess = [
  "open", "save", "sync", "v", "undo", "v", "redo", "v", "|3", "measure", "v", "dimension", "tag", "text", "|2",
  "home", "v", "|3", "section", "thinLines", "|2", "|2", "closeHidden", "switchWin", "v", "cursorS", "doorS", "windowS",
];

type Node = { label: string; icon?: string; box?: "+" | "-"; child?: boolean; last?: boolean; selected?: boolean };

const tree: Node[] = [
  { label: "视图 (全部)", icon: "views", box: "-", selected: true },
  { label: "楼层平面", child: true },
  { label: "天花板平面", child: true },
  { label: "三维视图", child: true },
  { label: "立面 (建筑立面)", child: true },
  { label: "面积平面 (人防分区面积)", child: true },
  { label: "面积平面 (净面积)", child: true },
  { label: "面积平面 (总建筑面积)", child: true },
  { label: "面积平面 (防火分区面积)", child: true, last: true },
  { label: "图例", icon: "legend" },
  { label: "明细表/数量", icon: "schedule", box: "+" },
  { label: "图纸 (全部)", icon: "sheet" },
  { label: "族", icon: "family", box: "+" },
  { label: "组", icon: "group", box: "+" },
  { label: "Revit 链接", icon: "link", last: true },
];

type Prop = { name: string; value?: string; kind?: "edit" | "check" | "input" | "group"; muted?: boolean };

const props: Prop[] = [
  { name: "图形", kind: "group" },
  { name: "视图比例", value: "1 : 100", kind: "input" },
  { name: "比例值 1:", value: "100", muted: true },
  { name: "显示模型", value: "标准" },
  { name: "详细程度", value: "中等" },
  { name: "零件可见性", value: "显示原状态" },
  { name: "可见性/图形替换", value: "编辑...", kind: "edit" },
  { name: "图形显示选项", value: "编辑...", kind: "edit" },
  { name: "基线", value: "无" },
  { name: "基线方向", value: "平面", muted: true },
  { name: "方向", value: "项目北" },
  { name: "墙连接显示", value: "清理所有墙连接", muted: true },
  { name: "规程", value: "建筑" },
  { name: "显示隐藏线", value: "按规程" },
  { name: "颜色方案位置", value: "背景" },
  { name: "颜色方案", value: "<无>", kind: "edit" },
  { name: "系统颜色方案", value: "编辑...", kind: "edit" },
  { name: "默认分析显示样式", value: "无" },
  { name: "日光路径", kind: "check" },
  { name: "范围", kind: "group" },
  { name: "裁剪视图", kind: "check" },
  { name: "裁剪区域可见", kind: "check" },
  { name: "注释裁剪", kind: "check" },
  { name: "视图范围", value: "编辑...", kind: "edit" },
  { name: "相关标高", value: "标高 1", muted: true },
];

function TitleBar() {
  return (
    <header className="flex h-[29px] items-start bg-white">
      <button aria-label="应用程序菜单" className="relative z-10 flex h-10 w-10 shrink-0 items-start border-r-2 border-b-2 border-[#222] bg-linear-to-b from-[#d8d8d8] to-[#858585] pt-1 pl-1">
        <svg viewBox="0 0 26 28" className="h-7 w-6">
          <path d="M4 2l9-2q8 1 7 8-1 4-5 6l8 12-7 2-7-11-3 7-5 3-1-1z" fill="#1c3f94" />
          <path d="M4 2l7 3-3 10-5 11-3 1z" fill="#0c2260" />
          <path d="M11 5q5-1 5 3-1 3-6 4z" fill="#14307a" />
        </svg>
        <Caret className="mt-3 h-1 w-[7px]" />
      </button>
      <h1 className="flex-1 text-center text-[15px] leading-7 whitespace-pre">Autodesk Revit 2016 -      项目1 - 楼层平面: 标高 1</h1>
      <div className="flex h-[29px] w-[571px] border-b border-[#777] bg-linear-to-b from-[#e8e8e8] to-[#bdbdbd]">
        <button aria-label="展开" className="flex w-[17px] items-center justify-center border-l border-[#999]">
          <svg viewBox="0 0 5 8" className="h-2 w-[5px]"><path d="M0 0v8l5-4z" fill="#333" /></svg>
        </button>
        <input
          aria-label="搜索"
          placeholder="键入关键字或短语"
          className="w-56 border border-black bg-white px-1 pb-1 font-['Noto_Sans_CJK_SC',sans-serif] text-sm italic placeholder:text-[#6d6d6d] placeholder:italic"
        />
        {["binoculars", "dish", "star"].map((n) => (
          <button key={n} aria-label={n} className="flex w-[30px] items-center justify-center"><Icon name={n} /></button>
        ))}
        <button className="flex flex-1 items-center pl-1 text-[15px]">
          <Icon name="user" />
          <span className="flex-1 pl-2 text-left">登录</span>
          <Caret className="mr-2 h-1 w-[7px]" />
        </button>
        <button aria-label="Exchange Apps" className="flex w-9 items-center justify-center border-r border-[#aaa]"><Icon name="exchange" /></button>
        <button aria-label="帮助" className="flex w-[52px] items-center justify-center gap-3 pl-1">
          <span className="flex size-5 items-center justify-center rounded-full border-2 border-[#5a6170] bg-white text-base font-bold text-[#2a4fc0]">?</span>
          <Caret className="h-1 w-[7px]" />
        </button>
      </div>
      <div className="flex h-[29px] w-[206px] pl-7">
        <button aria-label="最小化" className="flex w-[58px] items-center justify-center"><span className="h-px w-3 bg-black" /></button>
        <button aria-label="还原" className="flex w-[58px] items-center justify-center">
          <svg viewBox="0 0 13 13" className="size-[13px]"><path d="M3.500 3V.5h9v9H10M.5 3.500h9v9h-9z" fill="none" stroke="#000" /></svg>
        </button>
        <button aria-label="关闭" className="flex w-[58px] items-center justify-center">
          <svg viewBox="0 0 13 13" className="size-[13px]"><path d="M.5.5l12 12M12.500.5l-12 12" stroke="#000" strokeWidth="1.200" /></svg>
        </button>
      </div>
    </header>
  );
}

function RibbonTabs() {
  return (
    <nav className="flex h-6 items-end bg-[#9f9f9f] pl-[55px] text-[15px] text-[#1a1a1a]">
      {tabs.map((tab, i) => (
        <button
          key={tab}
          className={clsx(
            "h-[22px] leading-[22px] whitespace-nowrap",
            pluginTabs.includes(tab) ? "px-[14px]" : "px-3",
            i === 0 && "rounded-t-sm bg-linear-to-b from-[#d5d5d5] to-white",
          )}
        >
          {tab}
        </button>
      ))}
      <button aria-label="功能区显示" className="flex h-6 items-center gap-2 pl-7">
        <svg viewBox="0 0 18 12" className="h-3 w-[18px]">
          <rect x=".8" y=".8" width="16.400" height="10.400" rx="2.500" fill="#f0f0f0" stroke="#444" strokeWidth="1.400" />
          <path d="M5.500 8h7L9 4z" fill="#333" />
        </svg>
        <Caret className="h-1 w-[7px]" />
      </button>
    </nav>
  );
}

function ToolButton({ tool }: { tool: Tool }) {
  return (
    <button
      disabled={tool.disabled}
      className={clsx("relative flex shrink-0 flex-col items-center pt-[7px] text-[15px] leading-5", W[tool.size], tool.disabled ? "text-[#b4b4b4]" : "text-[#222]")}
    >
      <svg viewBox="0 0 38 38" aria-hidden="true" className="mb-[6px] size-[38px] drop-shadow-sm">{big[tool.icon]}</svg>
      {tool.lines.map((line) => (
        <span key={line} className="whitespace-nowrap">{line}</span>
      ))}
      {tool.menu === "below" && <Caret className="mt-[5px] h-1 w-[7px]" />}
      {tool.menu === "side" && <Caret className="absolute right-[2px] bottom-[22px] h-[3px] w-[5px]" />}
    </button>
  );
}

function Ribbon() {
  return (
    <section className="flex h-[120px] bg-linear-to-b from-[#e6e6e6] to-[#a9a9a9]">
      <div className="flex w-[62px] shrink-0 flex-col border-r border-[#b5b5b5] bg-white">
        <div className="h-[97px] px-[7px] pt-1">
          <button className="flex h-[89px] w-full flex-col items-center border-2 border-[#1668bd] bg-linear-to-b from-[#c3dbf6] to-[#abcdf0] pt-1 text-[15px] leading-5 text-[#222]">
            <svg viewBox="0 0 38 38" className="mb-1 size-[38px]">{big.cursor}</svg>
            修改
          </button>
        </div>
        <button className="flex h-[22px] items-center gap-2 border-t border-[#ccc] bg-[#eee] pl-[7px] text-[15px] text-[#222]">
          选择 <Caret className="h-[5px] w-[9px]" />
        </button>
      </div>
      {panels.map((panel) => (
        <div key={panel.title} className={clsx("flex shrink-0 flex-col border-r border-[#b5b5b5] bg-white", panel.width)}>
          <div className="flex h-[97px] pl-px">
            {panel.tools.map((tool) => (
              <ToolButton key={tool.icon} tool={tool} />
            ))}
          </div>
          <div className="mr-px flex h-[22px] items-center justify-center gap-2 border-t border-[#ccc] bg-[#eee] text-[15px] text-[#222]">
            {panel.title}
            {panel.menu && <Caret className="h-[5px] w-[9px]" />}
          </div>
        </div>
      ))}
    </section>
  );
}

function QuickAccess() {
  return (
    <div className="flex h-[31px] items-stretch border-y-2 border-[#6b6b6b] bg-linear-to-b from-[#ececec] to-[#b4b4b4] pl-1">
      {quickAccess.map((item, i) => {
        if (item === "v")
          return <button key={i} aria-label="更多" className="flex w-[14px] items-center justify-center"><Caret className="h-1 w-[7px]" /></button>;
        if (item[0] === "|")
          return <span key={i} className={clsx("flex justify-center", item === "|3" ? "w-3" : "w-[9px]")}><span className="w-px bg-[#aaa]" /></span>;
        return (
          <button
            key={i}
            aria-label={item}
            className={clsx("flex w-[30px] items-center justify-center", (item === "thinLines" || item === "cursorS") && "border-2 border-[#1668bd] bg-[#b5d4f4]")}
          >
            <Icon name={item} />
          </button>
        );
      })}
      <button aria-label="自定义" className="flex w-5 items-center justify-center"><Icon name="customise" /></button>
    </div>
  );
}

function DockHeader({ title }: { title: string }) {
  return (
    <div className="flex h-[27px] shrink-0 items-center justify-between bg-[#bfcddb] pr-1 pl-[3px] text-[15px]">
      <h2>{title}</h2>
      <button aria-label={`关闭${title}`}>
        <svg viewBox="0 0 12 12" className="size-3"><path d="M1.500 1.500l9 9M10.500 1.500l-9 9" stroke="#111" strokeWidth="2.200" /></svg>
      </button>
    </div>
  );
}

function TreeBox({ sign }: { sign: "+" | "-" }) {
  return (
    <svg viewBox="0 0 9 9" className="relative size-[9px] bg-white">
      <rect x=".5" y=".5" width="8" height="8" fill="#f8f8f8" stroke="#8f8f8f" />
      <path d={sign === "+" ? "M2 4.500h5M4.500 2v5" : "M2 4.500h5"} stroke="#2b4a8b" />
    </svg>
  );
}

function Gutter({ sign, half, stub }: { sign?: "+" | "-"; half?: "top" | "bottom"; stub?: boolean }) {
  return (
    <span className="relative flex h-[22px] w-[19px] shrink-0 items-center pl-1">
      <span
        className={clsx(
          "absolute left-2 border-l border-dotted border-[#999]",
          half === "top" ? "top-0 h-[11px]" : half === "bottom" ? "top-[11px] bottom-0" : "top-0 bottom-0",
        )}
      />
      {stub && <span className="absolute top-[11px] right-0 left-2 border-t border-dotted border-[#999]" />}
      {sign && <TreeBox sign={sign} />}
    </span>
  );
}

function ProjectBrowser() {
  return (
    <aside className="flex w-[366px] shrink-0 flex-col">
      <DockHeader title="项目浏览器 - 项目1" />
      <div className="mt-[2px] mr-[2px] flex-1 border-t-2 border-l border-[#6b6b6b] bg-white">
        <ul className="text-[15px] leading-[22px]">
          {tree.map((node, i) => (
            <li key={node.label} className="flex h-[22px] items-center">
              {node.child ? (
                <>
                  <Gutter />
                  <Gutter sign="+" stub half={node.last ? "top" : undefined} />
                  <span className="w-1 border-t border-dotted border-[#999]" />
                  <span className="pl-1">{node.label}</span>
                </>
              ) : (
                <>
                  <Gutter sign={node.box} stub half={i === 0 ? "bottom" : node.last ? "top" : undefined} />
                  <Icon name={node.icon ?? ""} className="size-[18px]" />
                  <span className={clsx("ml-[2px] px-[3px]", node.selected && "bg-[#e0e0e0]")}>{node.label}</span>
                </>
              )}
            </li>
          ))}
        </ul>
      </div>
    </aside>
  );
}

function Elevation({ x, y, turn }: { x: number; y: number; turn: number }) {
  return (
    <g>
      <g transform={`translate(${x} ${y}) rotate(${turn})`}>
        <path d="M-12 12L0 23.500 12 12z" fill="#000" />
        <circle r="16.500" fill="#fff" stroke="#000" />
        <path d={turn % 180 ? "M0 27v3" : "M-2 29.500h3"} stroke="#000" strokeWidth="1.200" />
      </g>
      <path d={`M${x - 3} ${y}h3`} stroke="#000" strokeWidth="1.200" />
    </g>
  );
}

function PlanDrawing() {
  return (
    <svg viewBox="0 0 1127 748" preserveAspectRatio="xMinYMin meet" className="h-[748px] w-[1127px]" role="img" aria-label="楼层平面">
      <g transform="translate(-372 -236)">
        <Elevation x={844.5} y={264} turn={0} />
        <Elevation x={486} y={568} turn={-90} />
        <Elevation x={1238} y={567} turn={90} />
        <Elevation x={845} y={894} turn={180} />
        <path d="M842.500 652.500h-136v-161h291v161h-135v5h140v-171h-301v171h141z" fill="#848484" stroke="#000" />
        <path d="M842 657v21" stroke="#000" strokeWidth="2" />
        <path d="M842.500 678q20-4 20-21" fill="none" stroke="#000" />
      </g>
    </svg>
  );
}

function ViewArea() {
  return (
    <main className="mr-2 ml-1 flex min-w-0 flex-1 flex-col border-t-2 border-l-2 border-[#6b6b6b] bg-[#f0f0f0]">
      <div className="flex min-h-0 flex-1">
        <div className="relative min-w-0 flex-1 overflow-hidden bg-white">
          <PlanDrawing />
          <div className="absolute top-2 right-1 flex items-center gap-[6px]">
            {["M1 6.500h11v3H1z", "M1 4.500h8v7H1zM4 4V1.500h8v8H9.500M4 7h2v2H4z", "M1 2h3l2.500 3L9 2h3L8.500 6.500 12 11H9L6.500 8 4 11H1l3.500-4.500z"].map((d) => (
              <button key={d} aria-label="视图窗口">
                <svg viewBox="0 0 13 13" className="size-3"><path d={d} fill="#fff" stroke="#444" strokeWidth="1.300" /></svg>
              </button>
            ))}
          </div>
          <div className="absolute top-7 right-px flex h-[118px] w-[35px] flex-col items-center rounded-md border-2 border-[#bdbdbd] bg-[#f7f7f7] pt-[2px]">
            <svg viewBox="0 0 9 9" className="mr-[2px] size-[9px] self-end"><circle cx="4.500" cy="4.500" r="4" fill="#aaa" /><path d="M3 3l3 3M6 3L3 6" stroke="#fff" /></svg>
            <button aria-label="二维控制盘" className="mt-2 flex flex-col items-center gap-1">
              <svg viewBox="0 0 24 24" className="size-6">
                <path d="M9 1h8q2 0 2 2v7a9 9 0 1 1-10-9z" fill="#f4f4f4" stroke="#9a9a9a" strokeWidth="1.300" />
                <circle cx="10" cy="10" r="4.500" fill="none" stroke="#9a9a9a" strokeWidth="1.300" />
                <text x="12" y="22" fontSize="9" fontWeight="700" fill="#6d9bd1">2D</text>
              </svg>
              <Caret className="h-[3px] w-[6px] opacity-50" />
            </button>
            <span className="my-[5px] h-px w-[26px] bg-[#bbb]" />
            <button aria-label="缩放" className="mt-1 flex flex-col items-center gap-2">
              <svg viewBox="0 0 18 18" className="size-[18px]">
                <rect x="1" y="1" width="11" height="11" fill="#b9dca5" stroke="#8cbb74" />
                <circle cx="11.500" cy="10.500" r="3.500" fill="#fff" stroke="#888" strokeWidth="1.300" /><path d="M14 13l3 4" stroke="#888" strokeWidth="1.800" />
              </svg>
              <Caret className="h-[3px] w-[6px] opacity-50" />
            </button>
            <svg viewBox="0 0 9 9" className="mt-auto mr-[2px] mb-px size-[9px] self-end"><circle cx="4.500" cy="4.500" r="4" fill="#aaa" /><path d="M2.500 4.500h4" stroke="#fff" /></svg>
          </div>
        </div>
        <div className="flex w-[19px] flex-col items-center justify-between py-1 text-[#555]">
          <Chevron d={UP} />
          <span className="h-5 w-full bg-[#cdcdcd]" />
          <Chevron d={DOWN} />
        </div>
      </div>
      <div className="flex h-[22px] items-start">
        <span className="w-[103px] pl-[27px] font-['Liberation_Mono',monospace] text-sm leading-5 whitespace-pre">1 : 100</span>
        {["detail", "cube", "sun", "shadow", "crop", "cropShow", "glasses", "bulb", "chip", "analytic", "constraint"].map((n) => (
          <button key={n} aria-label={n} className="flex w-7 shrink-0 justify-center"><Icon name={n} className="size-[18px]" /></button>
        ))}
        <button aria-label="向左滚动" className="ml-1 flex h-5 items-center text-[#555]"><Chevron d="M8 1L3 6l5 5" /></button>
        <div className="flex h-5 flex-1 justify-center">
          <span className="w-[21px] bg-[#cdcdcd]" />
        </div>
        <button aria-label="向右滚动" className="mr-2 flex h-5 items-center text-[#555]"><Chevron d="M4 1l5 5-5 5" /></button>
        <svg viewBox="0 0 14 14" className="mt-1 mr-1 size-[14px]"><path d="M0 10h3v3H0zM5 10h3v3H5zM10 10h3v3h-3zM5 5h3v3H5zM10 5h3v3h-3zM10 0h3v3h-3z" fill="#bbb" /></svg>
      </div>
    </main>
  );
}

function PropertyRow({ prop, index }: { prop: Prop; index: number }) {
  const id = `prop-${index}`;
  if (prop.kind === "group")
    return (
      <tr className="h-6 bg-[#dbdbdb]">
        <th colSpan={2} className="pr-1 pl-[2px] text-left font-normal">
          <span className="flex items-center justify-between">
            {prop.name}
            <svg viewBox="0 0 10 10" className="size-[10px]"><path d="M2 5l3-3 3 3M2 9l3-3 3 3" fill="none" stroke="#000" strokeWidth="1.500" /></svg>
          </span>
        </th>
      </tr>
    );
  return (
    <tr className={clsx("h-6", prop.muted && "text-[#808080]")}>
      <th className="border-r border-b border-dotted border-[#777] pl-[10px] text-left font-normal whitespace-nowrap">
        {prop.kind === "check" || prop.kind === "input" ? <label htmlFor={id}>{prop.name}</label> : prop.name}
      </th>
      <td className="border-r border-b border-dotted border-[#777]">
        {prop.kind === "input" && <input id={id} defaultValue={prop.value} className="block h-[23px] w-full border border-black bg-white pl-[6px]" />}
        {prop.kind === "edit" && (
          <button className="block h-[22px] w-full border border-r-2 border-b-2 border-[#adadad] bg-[#e1e1e1] leading-[19px]">{prop.value}</button>
        )}
        {prop.kind === "check" && <input id={id} type="checkbox" className="ml-[3px] block size-[13px] appearance-none border border-[#333] bg-white" />}
        {!prop.kind && <span className="pl-[2px]">{prop.value}</span>}
      </td>
    </tr>
  );
}

function Properties() {
  return (
    <aside className="flex w-[394px] shrink-0 flex-col bg-[#f0f0f0]">
      <DockHeader title="属性" />
      <div className="mt-[2px] flex min-h-0 flex-1 flex-col border-t-2 border-l-2 border-[#6b6b6b] text-[15px]">
        <div className="mr-[2px] flex h-[91px] shrink-0 items-center border-b border-[#ccc] bg-linear-to-b from-white to-[#efefef] pr-[2px] pl-1">
          <div className="flex size-[82px] items-center justify-center border-2 border-[#d5d5d5]">
            <svg viewBox="0 0 40 40" className="size-10 drop-shadow-sm">
              <path d="M1 1h24v13h-9v23H1z" fill="#ccd0d8" stroke={S} strokeWidth="1.500" />
              <path d="M25 4h12v12H25z" fill="#dfe2e7" stroke={S} strokeWidth="1.500" />
              <path d="M16 15h23v24H16z" fill="#f4f5f7" stroke={S} strokeWidth="1.500" />
              <path d="M16 15h9V2M16 15v22" fill="none" stroke="#fff" strokeWidth="2" strokeDasharray="2 2" />
            </svg>
          </div>
          <span className="flex-1 pl-[5px] text-[#333]">楼层平面</span>
          <Caret className="h-[5px] w-[9px]" />
        </div>
        <div className="flex h-7 shrink-0">
          <div className="relative w-[296px]">
            <select aria-label="视图实例" className="h-7 w-full appearance-none border border-[#adadad] bg-[#e1e1e1] pl-[3px]">
              <option>楼层平面: 标高 1</option>
            </select>
            <Chevron d={DOWN} className="pointer-events-none absolute top-[10px] right-[5px] size-[10px] text-[#555]" />
          </div>
          <button className="flex flex-1 items-center gap-1 pb-1 pl-[6px] whitespace-nowrap"><Icon name="editType" className="size-[18px]" />编辑类型</button>
        </div>
        <div className="flex min-h-0 flex-1 overflow-hidden">
          <div className="min-w-0 flex-1">
            <table className="w-full table-fixed border-separate border-spacing-0 bg-white leading-[22px]">
              <colgroup><col className="w-[186px]" /><col /></colgroup>
              <tbody>
                {props.map((prop, i) => (
                  <PropertyRow key={prop.name} prop={prop} index={i} />
                ))}
              </tbody>
            </table>
          </div>
          <div className="mr-[2px] ml-px flex w-[19px] flex-col items-center text-[#555]">
            <span className="flex h-[21px] items-center"><Chevron d={UP} /></span>
            <span className="h-[355px] w-full bg-[#cdcdcd]" />
            <Chevron d={DOWN} className="mt-auto mb-1" />
          </div>
        </div>
        <div className="flex h-[29px] shrink-0 items-center justify-between pr-[3px] pl-[2px]">
          <a href="#help" className="text-[#0066cc] underline">属性帮助</a>
          <button disabled className="h-6 w-[98px] border border-[#bfbfbf] bg-[#cccccc] leading-5 text-[#838383]">应用</button>
        </div>
      </div>
    </aside>
  );
}

function StatusBar() {
  return (
    <footer className="flex h-6 shrink-0 items-center overflow-hidden border-t-2 border-[#8a8a8a] bg-linear-to-b from-[#dedede] to-[#bcbcbc] text-[15px]">
      <p className="w-[984px] pt-[2px] whitespace-nowrap">单击可进行选择; 按 Tab 键并单击可选择其他项目; 按 Ctrl 键并单击可将新项目添加到选择集; 按 Shift 键并单击可取消选择。</p>
      <button aria-label="工作集" className="w-[30px] pl-1"><Icon name="worksets" /></button>
      <div className="relative mt-1 h-6 w-[204px]">
        <select aria-label="活动工作集" className="h-full w-full appearance-none bg-white"><option></option></select>
        <Chevron d={DOWN} className="pointer-events-none absolute top-2 right-1 size-[10px] text-[#999]" />
      </div>
      <button className="mx-1 flex w-[56px] items-center gap-1 bg-[#d4d4d4] pl-1"><Icon name="editable" className="size-[18px]" />:0</button>
      <button aria-label="设计选项" className="w-[26px]"><Icon name="listBox" className="size-[18px]" /></button>
      <button aria-label="添加到集" className="w-[25px]"><Icon name="arrowBox" className="size-[18px]" /></button>
      <div className="relative mt-1 h-6 w-[154px]">
        <select aria-label="设计选项集" className="h-full w-full appearance-none bg-white pl-[2px] text-[#777]"><option>主模型</option></select>
        <Chevron d={DOWN} className="pointer-events-none absolute top-2 right-1 size-[10px] text-[#999]" />
      </div>
      <div className="ml-auto flex items-center pr-[72px]">
        {["selLink", "selUnder", "selPin", "selFace", "selDrag"].map((n) => (
          <button key={n} aria-label={n} className="flex w-[26px] justify-center"><Icon name={n} className="size-[18px]" /></button>
        ))}
        <button className="flex items-center pt-[2px] pl-px"><Icon name="filter" className="size-[18px]" />:0</button>
      </div>
    </footer>
  );
}

// red mark-up and the channel's badge lie over the finished window
function Markup() {
  return (
    <div className="pointer-events-none absolute right-0 bottom-0 z-20 h-[280px] w-[570px] overflow-hidden">
      <svg viewBox="1350 750 570 280" className="size-full">
        <path d="M1360 760L1691 912l-5 11z" fill="#fb3a34" />
        <path d="M1692 912l14 16-25-5z" fill="#fb3a34" />
        <ellipse cx="1702.500" cy="950" rx="212" ry="20.500" fill="none" stroke="#fb3a34" strokeWidth="7" />
      </svg>
      <div className="absolute right-16 bottom-14 flex items-center gap-1">
        <svg viewBox="0 0 72 62" className="h-[62px] w-[72px]">
          <path d="M25 2C11 2 1 11 1 22c0 7 4 12 9 16l-2 10 9-6 9 1c0-12 9-21 24-21C48 10 38 2 25 2z" fill="#fff" fillOpacity=".85" stroke="#aaa" strokeOpacity=".5" />
          <path d="M49 22c-12 0-21 8-21 18s9 18 21 18l9-1 8 5-2-8c4-3 7-8 7-14 0-10-10-18-22-18z" fill="#fff" stroke="#777" strokeWidth="1.400" />
          <circle cx="15.500" cy="16" r="2.800" fill="#e8413b" stroke="#777" /><circle cx="35" cy="16" r="2.800" fill="#e8413b" stroke="#777" />
          <circle cx="41" cy="33" r="2.500" fill="#fff" stroke="#777" /><circle cx="56" cy="33" r="2.500" fill="#fff" stroke="#777" />
        </svg>
        <span className="font-['Lato',sans-serif] text-5xl leading-[62px] font-light text-white [text-shadow:1px_1px_1px_#444]">BIMTECH</span>
      </div>
    </div>
  );
}

export default function App() {
  return (
    <div className="relative flex h-screen flex-col overflow-hidden bg-[#e0e1e3] font-['Open_Sans','Noto_Sans_CJK_SC',sans-serif] text-black">
      <svg className="absolute size-0" aria-hidden="true">
        <defs>
          <linearGradient id="metal" x1="0" y1="0" x2="1" y2="1"><stop offset="0" stopColor="#fff" /><stop offset="1" stopColor="#c3c8d1" /></linearGradient>
          <linearGradient id="metalDark" x1="0" y1="0" x2="1" y2="1"><stop offset="0" stopColor="#8b93a0" /><stop offset="1" stopColor="#d5d9e0" /></linearGradient>
          <linearGradient id="metalH"><stop offset="0" stopColor="#c3c8d1" /><stop offset=".4" stopColor="#fff" /><stop offset="1" stopColor="#aab0bb" /></linearGradient>
        </defs>
      </svg>
      <TitleBar />
      <RibbonTabs />
      <Ribbon />
      <QuickAccess />
      <div className="h-[30px] shrink-0" />
      <div className="flex min-h-0 flex-1 bg-[#f0f0f0]">
        <ProjectBrowser />
        <ViewArea />
        <Properties />
      </div>
      <StatusBar />
      <Markup />
    </div>
  );
}
